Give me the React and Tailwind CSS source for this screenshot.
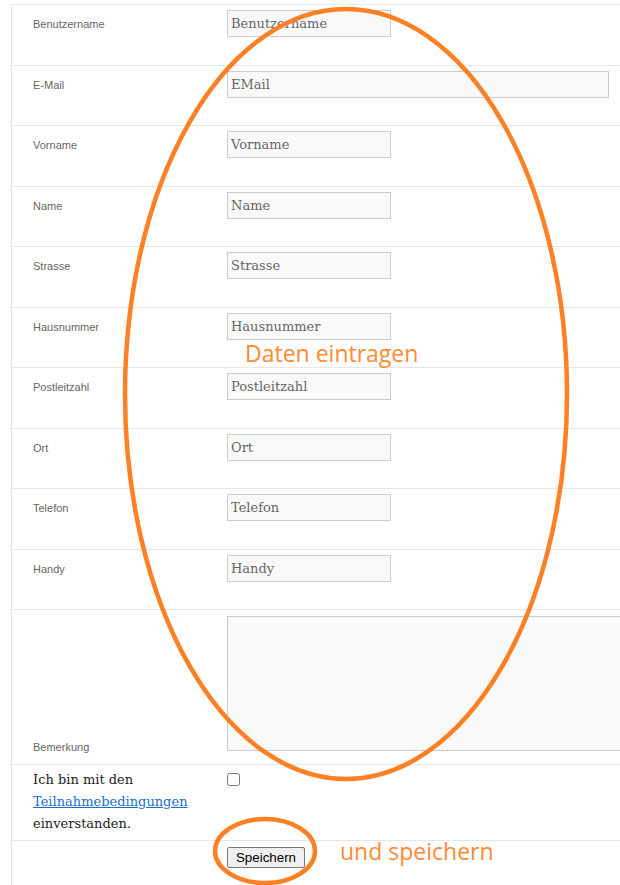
import React from "react";

const fields = [
  { label: "Benutzername", ph: "Benutzername" },
  { label: "E-Mail", ph: "EMail", wide: true },
  { label: "Vorname", ph: "Vorname" },
  { label: "Name", ph: "Name" },
  { label: "Strasse", ph: "Strasse" },
  { label: "Hausnummer", ph: "Hausnummer" },
  { label: "Postleitzahl", ph: "Postleitzahl" },
  { label: "Ort", ph: "Ort" },
  { label: "Telefon", ph: "Telefon" },
  { label: "Handy", ph: "Handy" },
];

const serif = { fontFamily: '"DejaVu Serif", Georgia, serif' };
const sans = { fontFamily: '"Liberation Sans", Arial, sans-serif' };

export default function App() {
  return (
    <div className="relative w-[620px] h-[885px] overflow-hidden bg-white">
      <div className="ml-[11px] mt-[4px] border-l border-[#e6e6e6] h-[881px]">
        {fields.map((f) => (
          <div key={f.label} className="flex h-[60.5px] border-t border-[#e6e6e6]">
            <div
              className="w-[215px] shrink-0 pl-[21px] pt-[12px] text-[11px] leading-[14px] text-[#666]"
              style={sans}
            >
              {f.label}
            </div>
            <div className="pt-[5px]">
              <input
                readOnly
                placeholder={f.ph}
                className={`${f.wide ? "w-[382px]" : "w-[164px]"} block h-[27px] border border-[#cccccc] bg-[#f9f9f9] px-[3px] text-[13px] text-[#666] placeholder:text-[#666] outline-none`}
                style={serif}
              />
            </div>
          </div>
        ))}
        <div className="flex h-[155px] border-t border-[#e6e6e6]">
          <div
            className="w-[215px] shrink-0 pl-[21px] flex items-end pb-[10px] text-[11px] leading-[14px] text-[#666]"
            style={sans}
          >
            Bemerkung
          </div>
          <div className="pt-[6px] flex-1">
            <textarea
              readOnly
              className="block w-[400px] h-[135px] border border-[#cccccc] bg-[#f9f9f9] resize-none outline-none"
            />
          </div>
        </div>
        <div className="flex h-[76px] border-t border-[#e6e6e6]">
          <div
            className="w-[215px] shrink-0 pl-[21px] pt-[4px] text-[13px] leading-[22px] text-[#222]"
            style={serif}
          >
            Ich bin mit den
            <br />
            <a href="#" className="text-[#1a6fc9] underline">
              Teilnahmebedingungen
            </a>
            <br />
            einverstanden.
          </div>
          <div className="pt-[8px]">
            <input type="checkbox" className="w-[13px] h-[13px] m-0 block" />
          </div>
        </div>
        <div className="flex border-t border-[#e6e6e6] h-[60px]">
          <div className="w-[215px] shrink-0" />
          <div className="pt-[6px]">
            <button
              className="block h-[21px] w-[78px] bg-[#efefef] border border-[#767676] rounded-[2px] text-[13.33px] leading-[17px] text-black"
              style={sans}
            >
              Speichern
            </button>
          </div>
        </div>
      </div>

      <svg className="absolute left-0 top-0 pointer-events-none" width="620" height="885">
        <ellipse cx="346" cy="394" rx="221" ry="385" fill="none" stroke="#fd8025" strokeWidth="4.5" />
        <ellipse cx="265" cy="851" rx="50" ry="32" fill="none" stroke="#fd8025" strokeWidth="4.5" />
      </svg>
      <div
        className="absolute left-[245px] top-[338px] text-[23px] leading-[30px] text-[#fd8a35] pointer-events-none"
        style={{ fontFamily: '"Open Sans", sans-serif' }}
      >
        Daten eintragen
      </div>
      <div
        className="absolute left-[340px] top-[836px] text-[23px] leading-[30px] text-[#fd8a35] pointer-events-none"
        style={{ fontFamily: '"Open Sans", sans-serif' }}
      >
        und speichern
      </div>
    </div>
  );
}
